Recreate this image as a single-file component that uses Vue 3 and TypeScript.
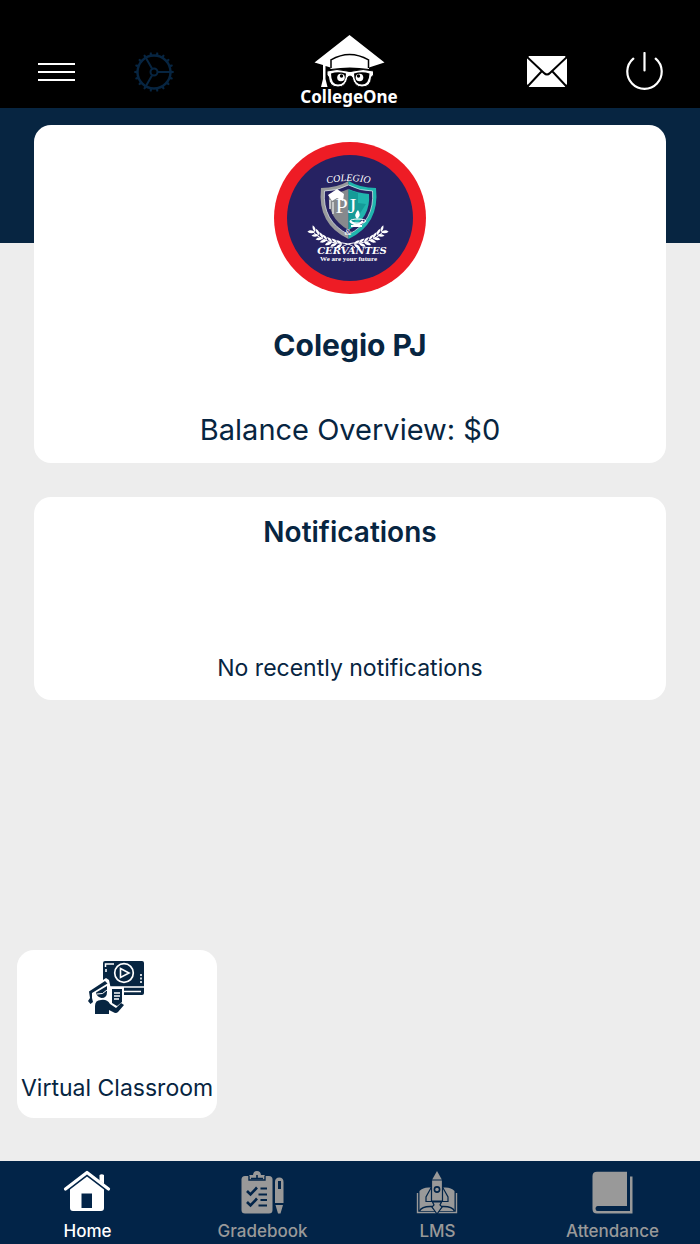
<script setup lang="ts">
import { ref } from 'vue'

type TabId = 'home' | 'gradebook' | 'lms' | 'attendance'

const tabs: { id: TabId; label: string }[] = [
  { id: 'home', label: 'Home' },
  { id: 'gradebook', label: 'Gradebook' },
  { id: 'lms', label: 'LMS' },
  { id: 'attendance', label: 'Attendance' },
]

const active = ref<TabId>('home')
const school = 'Colegio PJ'
const balance = 0

const teeth = Array.from({ length: 18 }, (_, i) => i * 20)

// Leaf pairs along the right laurel branch: x, y, angle
const leaves: [number, number, number][] = [
  [80, 102, 12], [85, 101, 6], [90, 100, 0], [95, 98, -6], [99, 96, -12], [103, 93, -18], [107, 90, -26],
]
</script>

<template>
  <div class="app">
    <header class="topbar">
      <div class="group">
        <button type="button" class="icon-btn" aria-label="Menu">
          <svg width="37" height="20" viewBox="0 0 37 20" fill="none" stroke="#fff" stroke-width="2">
            <path d="M0 2h37M0 10h37M0 18h37" />
          </svg>
        </button>
        <button type="button" class="icon-btn" aria-label="Settings">
          <svg width="40" height="40" viewBox="-20 -20 40 40" fill="none" stroke="#072541" stroke-width="2">
            <circle r="16.5" stroke-width="2.4" />
            <circle r="3.5" />
            <path d="M4 0H16M-2 -3.5L-8.2 -14.2M-2 3.5L-8.2 14.2" />
            <path v-for="a in teeth" :key="a" d="M17 -1.4L19.8 -.8V.8L17 1.4Z" fill="#072541" stroke="none" :transform="`rotate(${a})`" />
          </svg>
        </button>
      </div>

      <svg class="brand" width="100" height="73" viewBox="0 0 100 73" role="img" aria-label="CollegeOne">
        <path d="M49.500 0L84.500 27.500L69 32.500V34Q50 31 30.500 34V32.500L25.500 31V44L27.500 52H21L23 44V30L14.500 27.500Z" fill="#fff" />
        <path d="M31 33V24.800Q49.500 14 68.500 24.800V33" fill="none" stroke="#000" stroke-width="1.500" />
        <path d="M27 36Q37 33 47 36Q50 37 53 36Q63 33 73.500 36V40L71.500 42Q71 52 62 52Q54 52 52 42Q50 40 48 42Q46 52 38 52Q29 52 28.500 42L27 40Z" fill="#fff" stroke="#000" />
        <path d="M31 38.500Q38 36 46 38.500Q46 49.500 38 49.500Q31 49.500 31 38.500ZM54 38.500Q62 36 69.500 38.500Q69 49.500 62 49.500Q54 49.500 54 38.500Z" fill="#000" />
        <circle cx="41" cy="42.500" r="3.800" fill="#fff" /><circle cx="59.500" cy="42.500" r="3.800" fill="#fff" />
        <circle cx="41.500" cy="41" r="1.700" fill="#000" /><circle cx="58.500" cy="41" r="1.700" fill="#000" />
        <text x="49" y="68" text-anchor="middle" class="brand-text">CollegeOne</text>
      </svg>

      <div class="group end">
        <button type="button" class="icon-btn" aria-label="Messages">
          <svg width="40" height="32" viewBox="0 0 40 32">
            <path d="M2 0H38L40 3V28L38 31H2L0 28V3Z" fill="#fff" />
            <path d="M0 1L17 17Q20 20 23 17L40 1M0 31L14.500 15.500M40 31L25.500 15.500" fill="none" stroke="#000" stroke-width="2" />
          </svg>
        </button>
        <button type="button" class="icon-btn" aria-label="Log out">
          <svg width="38" height="40" viewBox="0 0 38 40" fill="none" stroke="#fff" stroke-width="2.2" stroke-linecap="round">
            <path d="M7.300 6.600A17.200 17.200 0 1 0 29.700 6.600M18.500 1V18.500" />
          </svg>
        </button>
      </div>
    </header>

    <main class="content">
      <section class="card overview">
        <svg width="152" height="152" viewBox="0 0 152 152" role="img" aria-label="Colegio PJ &amp; Cervantes">
          <circle cx="76" cy="76" r="76" fill="#ee1c25" />
          <circle cx="76" cy="76" r="63" fill="#262262" />
          <path id="crest-arc" d="M48 43Q74 35 101 43" fill="none" />
          <text class="crest-top"><textPath href="#crest-arc" startOffset="50%" text-anchor="middle">COLEGIO</textPath></text>
          <path d="M74.500 39Q63 46 47 46Q43 82 74.500 97Z" fill="#999b9d" />
          <path d="M74.500 39Q86 46 102 46Q106 82 74.500 97Z" fill="#20b6ae" />
          <path d="M74.500 43Q63 49 50.500 49Q48 79 74.500 92.500Q101 79 98.500 49Q86 49 74.500 43Z" fill="#262262" stroke="#e6eef2" stroke-width=".7" />
          <path d="M74.500 47Q66 51 55 52Q53 76 74.500 88Z" fill="#87898d" />
          <path d="M74.500 47Q83 51 95 52Q97 76 74.500 88Z" fill="#20b6ae" />
          <path d="M75 48L84 51V61L92 62L78 84L75 86Z" fill="#159b98" />
          <path d="M54 53L63 47L70 52L69 59L63 56L58 59Z" fill="#fff" />
          <path d="M56 58V67M59 60V72" stroke="#ddd" stroke-width="1.500" />
          <text x="72" y="71" text-anchor="middle" class="crest-pj">PJ</text>
          <path d="M84 68Q79 73 83 77Q88 73 84 68Z" fill="#fff" />
          <path d="M76 79Q83 86 89 79M77 84H88" fill="none" stroke="#fff" stroke-width="2" />
          <ellipse cx="84" cy="79" rx="8" ry="2" fill="none" stroke="#fff" />
          <text x="74" y="93" text-anchor="middle" class="crest-amp">&amp;</text>
          <g v-for="side in [1, -1]" :key="side" :transform="side === 1 ? undefined : 'translate(148 0) scale(-1 1)'" fill="#fff">
            <path d="M67 106Q73 100 86 101Q100 99 109 90" fill="none" stroke="#fff" stroke-width="1" />
            <g v-for="[x, y, a] in leaves" :key="x" :transform="`translate(${x} ${y}) rotate(${a})`">
              <path d="M0 0Q0 -4 5 -5Q4 -1 0 0ZM0 0Q2 4 7 3Q5 -1 0 0Z" />
            </g>
          </g>
          <text x="78" y="112" text-anchor="middle" class="crest-name">CERVANTES</text>
          <text x="74.500" y="119" text-anchor="middle" class="crest-motto">We are your future</text>
        </svg>
        <h1>{{ school }}</h1>
        <p class="balance">Balance Overview: ${{ balance }}</p>
      </section>

      <section class="card notifications">
        <h2>Notifications</h2>
        <p>No recently notifications</p>
      </section>

      <button type="button" class="tile">
        <svg width="58" height="55" viewBox="0 0 58 55" aria-hidden="true">
          <path d="M17 1H54Q56 1 56 3V33Q56 35 54 35H15V3Q15 1 17 1Z" fill="#072541" />
          <g fill="none" stroke="#fff">
            <path d="M17.500 7V4H26M18 9V12" stroke-width="1.500" />
            <path d="M53 14V24" stroke-width="1.600" stroke-dasharray="2 1.500" />
            <path d="M15 27H56M34 31.500H53" stroke-width="1.600" />
            <circle cx="36" cy="13" r="9.300" stroke-width="1.700" />
            <path d="M32.500 8.500L41 13L32.500 17.500Z" stroke-width="1.600" />
          </g>
          <path d="M6 26L18 18L21 20L22.500 27H36V42L33 49L23 44L10 36Z" fill="#fff" />
          <path d="M1 31.500L17 21L19.500 23.500L4 33V38L5 42L2.500 44L0 41L2 38Z" fill="#072541" />
          <path d="M8 32.500L19 26V32Q19 38 13.500 38Q9 37 8 32.500Z" fill="#072541" />
          <path d="M9 34Q15 35 19 30" fill="none" stroke="#fff" />
          <path d="M7 54V46Q7 40 13 40Q19 39 22 44L28 48L33 43L36 45L30 52Q28 54 25 52L21 50V54Z" fill="#072541" />
          <path d="M24 29H34V42L29 46L24 43Z" fill="#072541" />
          <path d="M26 33H32M26 36H32M26 39H31" stroke="#fff" stroke-width="1.300" />
        </svg>
        <span>Virtual Classroom</span>
      </button>
    </main>

    <nav class="tabbar" aria-label="Main">
      <a v-for="tab in tabs" :key="tab.id" :href="`#${tab.id}`" :class="['tab', { active: active === tab.id }]" :aria-current="active === tab.id ? 'page' : undefined" @click.prevent="active = tab.id">
        <svg width="49" height="46" viewBox="0 0 49 46" fill="currentColor" aria-hidden="true">
          <template v-if="tab.id === 'home'">
            <path d="M2.500 19L24 2.500L45.500 19" fill="none" stroke="currentColor" stroke-width="3.200" stroke-linecap="round" stroke-linejoin="round" />
            <path d="M36.500 5Q38.800 3.500 41 5V14L36.500 10.500Z" />
            <path fill-rule="evenodd" d="M24 6.500L41 19.500V38Q41 41 38 41H10Q7 41 7 38V19.500ZM18.500 23.500V38H29V23.500Z" />
          </template>
          <template v-else-if="tab.id === 'gradebook'">
            <rect x="3.500" y="6" width="31" height="37.500" rx="3.500" />
            <path d="M11 5H15Q15.500 1 19 1Q22.500 1 23 5H27V10H11Z" />
            <g fill="none" stroke="#022448" stroke-width="2">
              <path d="M11 5.500V10H27V5.500" stroke-width="1.400" />
              <path d="M19 5V8M13 8.500H25" stroke-width="1.600" />
              <path d="M9 21L12.500 24.500L19 17.500M9 32L12.500 35.500L19 28.500" stroke-width="2.600" />
              <path d="M22.500 18.500H29M20.500 24.500H29M22.500 30H29M20.500 35.500H29" />
            </g>
            <path fill-rule="evenodd" d="M37 12Q37 7.500 41.300 7.500Q45.500 7.500 45.500 12V33H37ZM40 11V19H43V11ZM37.500 35H45L42.500 43.500H40Z" />
          </template>
          <template v-else-if="tab.id === 'lms'">
            <path d="M6.500 21Q10 17 17 17.500H31Q38 17 41.500 21V41H6.500Z" />
            <path d="M4.500 23V42.500H43.500V23" fill="none" stroke="currentColor" stroke-width="1.400" />
            <path d="M6.500 41Q9 36 19 36.500L24 42L29 36.500Q39 36 41.500 41" fill="none" stroke="#022448" stroke-width="1.600" />
            <g stroke="#022448" stroke-width="1.200">
              <path d="M18.500 17L13 27V31.500H35V27L29.500 17Z" />
              <path d="M19.500 32H28.500L27 35L29 37L24 44L19 37L21 35Z" />
              <path d="M18.500 10H29.500V31H18.500Z" />
              <path d="M24 1L28.800 9.500H19.200Z" stroke="none" />
              <circle cx="24" cy="19.500" r="2.600" stroke-width="1.600" />
            </g>
          </template>
          <template v-else>
            <path d="M9 1.700H39V36H9.500Q7.500 36 7.500 38.500Q7.500 41 9.500 41H42V6.500H44.500V43.500H9Q4.500 43.500 4.500 39V6Q4.500 1.700 9 1.700Z" />
          </template>
        </svg>
        <span>{{ tab.label }}</span>
      </a>
    </nav>
  </div>
</template>

<style>
body {
  margin: 0;
}
</style>

<style scoped>
.app {
  display: flex;
  flex-direction: column;
  min-height: 100vh;
  background: #ededed;
  color: #072541;
  font-family: Inter, "Liberation Sans", sans-serif;
}
.topbar {
  display: grid;
  grid-template-columns: 1fr auto 1fr;
  align-items: center;
  padding: 35px 36px 0 38px;
  background: #000;
}
.brand {
  margin-right: 2px;
}
.group {
  display: flex;
  align-items: center;
  gap: 59px;
}
.end {
  justify-content: flex-end;
}
.icon-btn {
  display: flex;
  padding: 0;
  border: 0;
  background: none;
  cursor: pointer;
}
svg {
  display: block;
}
.brand-text {
  font: 700 17px "Noto Sans", sans-serif;
  fill: #fff;
}
.content {
  flex: 1;
  display: flex;
  flex-direction: column;
  padding: 17px 34px 43px;
  background: linear-gradient(#072541 135px, #ededed 135px);
}
.card {
  display: flex;
  flex-direction: column;
  align-items: center;
  border-radius: 17px;
  background: #fff;
  text-align: center;
}
.overview {
  padding: 17px 16px 15px;
}
h1, h2, p {
  margin: 0;
}
h1 {
  margin-top: 33px;
  font-size: 30px;
  line-height: 36px;
  font-weight: 700;
}
.balance {
  margin-top: 49px;
  font-size: 29px;
  line-height: 36px;
}
.notifications {
  margin-top: 34px;
  padding: 17px 16px;
}
h2 {
  font-size: 28px;
  line-height: 36px;
  font-weight: 600;
}
.notifications p {
  margin-top: 103px;
  font-size: 23px;
  line-height: 30px;
}
.tile {
  display: flex;
  flex-direction: column;
  align-items: center;
  justify-content: space-between;
  align-self: flex-start;
  min-width: 200px;
  min-height: 168px;
  margin: auto 0 0 -17px;
  padding: 10px 4px 15px;
  border: 0;
  border-radius: 17px;
  background: #fff;
  color: inherit;
  font-family: inherit;
  font-size: 23px;
  line-height: 30px;
  white-space: nowrap;
  cursor: pointer;
}
.tabbar {
  display: grid;
  grid-template-columns: repeat(4, 1fr);
  background: #022448;
}
.tab {
  display: flex;
  flex-direction: column;
  align-items: center;
  gap: 4px;
  padding: 9px 0 2px;
  color: #999;
  font-size: 17px;
  line-height: 22px;
  font-weight: 500;
  text-decoration: none;
}
.active {
  color: #fff;
}
.crest-top {
  font: italic 10px "Liberation Serif", serif;
  fill: #fff;
}
.crest-pj {
  font: 22px "Liberation Serif", serif;
  fill: #fff;
}
.crest-amp {
  font: italic 9px "Liberation Serif", serif;
  fill: #fff;
}
.crest-name {
  font: italic 700 10px "DejaVu Serif", serif;
  fill: #fff;
}
.crest-motto {
  font: 700 7px "Liberation Serif", serif;
  fill: #fff;
}
</style>
